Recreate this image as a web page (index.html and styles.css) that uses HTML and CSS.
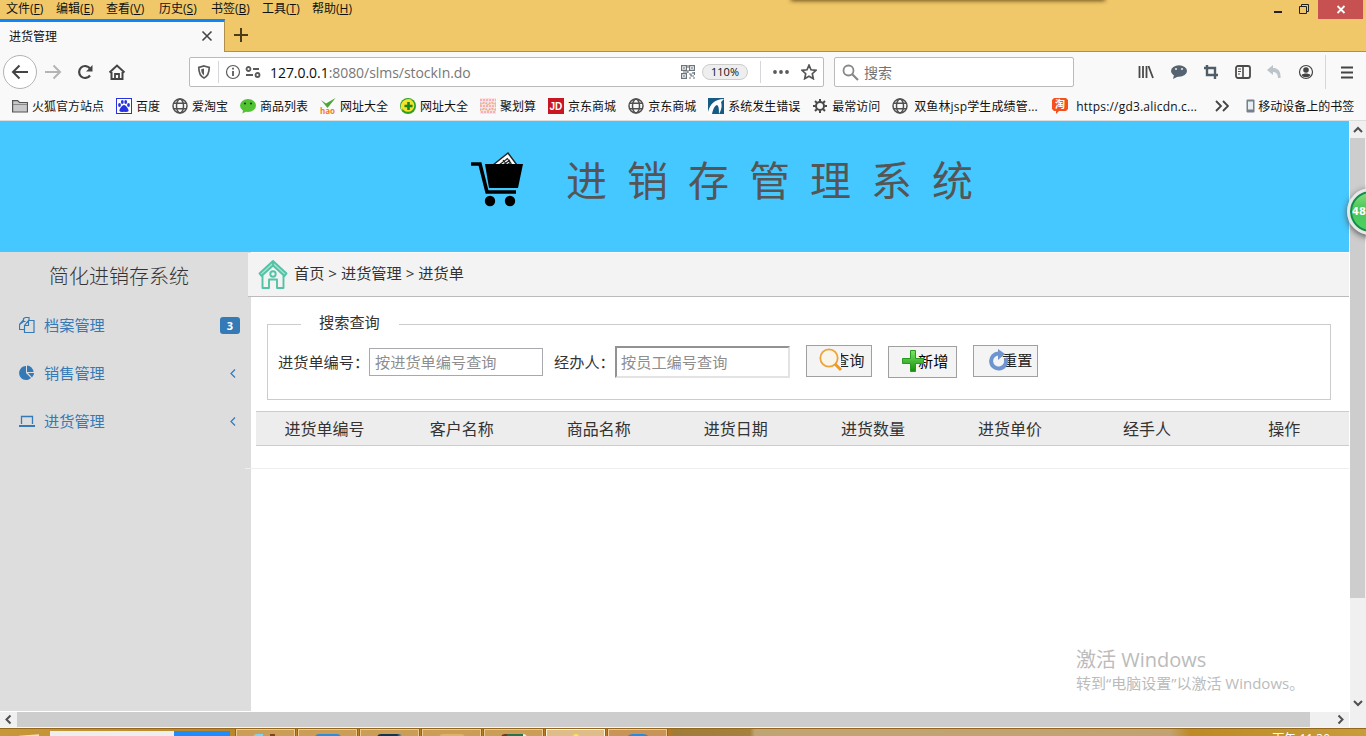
FILE: index.html
```html
<!DOCTYPE html>
<html lang="zh-CN">
	<head>
		<meta charset="UTF-8">
		<title>进货管理</title>
		<link rel="stylesheet" href="styles.css">
	</head>
	<body>
		<div class="titlebar">
			<div class="menubar">
				<span class="m1">文件(<u>F</u>)</span>
				<span class="m2">编辑(<u>E</u>)</span>
				<span class="m3">查看(<u>V</u>)</span>
				<span class="m4">历史(<u>S</u>)</span>
				<span class="m5">书签(<u>B</u>)</span>
				<span class="m6">工具(<u>T</u>)</span>
				<span>帮助(<u>H</u>)</span>
				<div class="window-buttons">
					<svg width="44" height="19" viewBox="0 0 44 19"><path d="M3 12h8" stroke="#222" stroke-width="2"/><path d="M28.500 6.500h7v7h-7zM30.500 6v-1.500h7v7h-1.500" fill="none" stroke="#222"/></svg>
					<div class="win-close"><svg width="10" height="9" viewBox="0 0 10 9"><path d="M1.500 1l7 7M8.500 1l-7 7" stroke="#fff" stroke-width="1.800"/></svg></div>
				</div>
			</div>
			<div class="tabs">
				<div class="tab">
					<span>进货管理</span>
					<svg width="12" height="12" viewBox="0 0 12 12"><path d="M1.500 1.500l9 9M10.500 1.500l-9 9" stroke="#444" stroke-width="1.600"/></svg>
				</div>
				<div class="tab-rest">
					<svg width="16" height="16" viewBox="0 0 16 16"><path d="M8 1v14M1 8h14" stroke="#4b3d1c" stroke-width="2"/></svg>
				</div>
			</div>
			<div class="top-shadow"></div>
		</div>

		<div class="navbar">
			<div class="back"><svg width="18" height="16" viewBox="0 0 18 16"><path d="M17 8H2M8.500 1.500L2 8l6.500 6.500" fill="none" stroke="#444" stroke-width="2"/></svg></div>
			<svg class="forward" width="18" height="16" viewBox="0 0 18 16"><path d="M1 8h15M9.500 1.500L16 8l-6.500 6.500" fill="none" stroke="#b5b5b5" stroke-width="2"/></svg>
			<svg class="reload" width="16" height="16" viewBox="0 0 16 16"><path d="M13 11.500A6 6 0 1 1 13 4.500" fill="none" stroke="#444" stroke-width="2.200"/><path d="M15.500 1v6.500H9z" fill="#444"/></svg>
			<svg class="home" width="18" height="16" viewBox="0 0 18 16"><path d="M1.500 8.500L9 1.500l7.500 7M3.500 8v7h11V8" fill="none" stroke="#444" stroke-width="2"/><path d="M7 15v-5h4v5" fill="none" stroke="#444" stroke-width="1.800"/></svg>

			<div class="urlbar">
				<svg class="shield" width="14" height="14" viewBox="0 0 14 14"><path d="M7 1l5.200 1.500c0 5-1 8.500-5.200 10.500C2.800 11 1.800 7.500 1.800 2.500z" fill="#fff" stroke="#5a5a5a" stroke-width="1.700"/><path d="M7 3.500v7C5 9 4.200 7 4.200 4.200z" fill="#5a5a5a"/></svg>
				<i class="sep"></i>
				<svg class="info" width="16" height="16" viewBox="0 0 16 16"><circle cx="8" cy="8" r="6.500" fill="none" stroke="#5a5a5a" stroke-width="1.200"/><path d="M8 7v5M8 3.800v1.800" stroke="#5a5a5a" stroke-width="1.800"/></svg>
				<svg class="perms" width="16" height="12" viewBox="0 0 16 12"><g fill="none" stroke="#5a5a5a" stroke-width="1.800"><circle cx="3.500" cy="3" r="2"/><path d="M8 3h6M1 9h7"/><circle cx="12.500" cy="9" r="2"/></g></svg>
				<span class="url">127.0.0.1<em>:8080/slms/stockIn.do</em></span>
				<svg class="qr" width="14" height="14" viewBox="0 0 14 14"><g fill="none" stroke="#6c757c" stroke-width="1.200"><path d="M.6.600h4.800v4.800H.6zM8.600.600h4.800v4.800H8.600zM.6 8.600h4.800v4.800H.6z"/><path d="M3 2v2M11 2v2M3 10v2M7 0v3M7 5v3M2 7h5M8 9h2v2h3M12 7v2M8 13h2M12 13h2M13.500 7v3"/></g></svg>
				<span class="zoom">110%</span>
				<i class="sep zoom-sep"></i>
				<svg class="dots" width="16" height="4" viewBox="0 0 16 4" fill="#5a5a5a"><circle cx="2" cy="2" r="1.900"/><circle cx="8" cy="2" r="1.900"/><circle cx="14" cy="2" r="1.900"/></svg>
				<svg width="16" height="16" viewBox="0 0 16 16"><path d="M8 1.200l2 4.600 5 .5-3.700 3.400 1 5L8 12.200l-4.300 2.500 1-5L1 6.300l5-.5z" fill="none" stroke="#555" stroke-width="1.700"/></svg>
			</div>
			<div class="searchbar">
				<svg width="17" height="17" viewBox="0 0 17 17"><circle cx="6.500" cy="6.500" r="5" fill="none" stroke="#888" stroke-width="1.800"/><path d="M10 10l6 6" stroke="#888" stroke-width="2.200"/></svg>
				<span>搜索</span>
			</div>
			<div class="tools">
				<svg width="16" height="16" viewBox="0 0 16 16"><path d="M1.500 2v12M5 2v12M8.500 2v12M10.500 2l4.500 12" stroke="#4a4a4a" stroke-width="1.800"/></svg>
				<svg width="18" height="16" viewBox="0 0 18 16"><ellipse cx="9" cy="7" rx="8" ry="5.800" fill="#566370"/><path d="M4 11l-1 4 6-3z" fill="#566370"/><circle cx="6" cy="5" r="1.100" fill="#dfe5ea"/><circle cx="12" cy="5" r="1.100" fill="#dfe5ea"/></svg>
				<svg width="16" height="16" viewBox="0 0 16 16"><path d="M1 4h11v11M4 1v10h11" fill="none" stroke="#4f5d69" stroke-width="2.400"/></svg>
				<svg width="16" height="16" viewBox="0 0 16 16"><rect x="1" y="2" width="14" height="12" rx="2" fill="none" stroke="#4a4a4a" stroke-width="1.800"/><path d="M8 2v12" stroke="#4a4a4a" stroke-width="1.600"/><path d="M3 5h3M3 7.500h3M3 10h2" stroke="#4a4a4a"/></svg>
				<svg width="16" height="16" viewBox="0 0 16 16"><path d="M1 6l6-5v3c5 0 8 3 7.500 10H12c0-4-2-6-5-6v3z" fill="#bcc3c9"/></svg>
				<svg width="16" height="16" viewBox="0 0 16 16"><circle cx="8" cy="8" r="6.500" fill="none" stroke="#444" stroke-width="1.200"/><circle cx="8" cy="6" r="2.800" fill="#444"/><path d="M3.500 11c2-2 7-2 9 0-1.500 3-7.500 3-9 0z" fill="#444"/></svg>
			</div>
			<div class="hamburger"><svg width="12" height="13" viewBox="0 0 12 13"><path d="M0 1.500h12M0 6.500h12M0 11.500h12" stroke="#444" stroke-width="1.800"/></svg></div>
		</div>

		<div class="bookmarks">
			<span class="bm"><svg width="16" height="16" viewBox="0 0 16 16"><path d="M.6 14V2.600h5L7.500 4.500h8V14z" fill="#c9c9cc" stroke="#555" stroke-width="1.200"/><path d="M1 6.500h14" stroke="#777" stroke-width=".8"/></svg>火狐官方站点</span>
			<span class="bm"><svg width="16" height="16" viewBox="0 0 16 16"><rect x=".5" y=".5" width="15" height="15" fill="#fff" stroke="#2932e1"/><g fill="#2932e1"><ellipse cx="3.500" cy="7" rx="1.400" ry="1.900"/><ellipse cx="6.300" cy="4" rx="1.400" ry="2"/><ellipse cx="9.700" cy="4" rx="1.400" ry="2"/><ellipse cx="12.500" cy="7" rx="1.400" ry="1.900"/><path d="M8 7c2 0 4 3.500 4.500 5s-1 2.500-4.500 1.800C4.500 14.500 3 13.500 3.500 12S6 7 8 7z"/></g></svg>百度</span>
			<span class="bm"><svg width="16" height="16" viewBox="0 0 16 16"><g fill="none" stroke="#505050" stroke-width="1.500"><circle cx="8" cy="8" r="7"/><ellipse cx="8" cy="8" rx="3.500" ry="7"/><path d="M2 5.300h12M2 10.700h12"/></g></svg>爱淘宝</span>
			<span class="bm"><svg width="16" height="16" viewBox="0 0 16 16"><ellipse cx="8" cy="7.500" rx="8" ry="6.500" fill="#51c332"/><path d="M3 12l-.5 3.500L7 13z" fill="#51c332"/><circle cx="5" cy="5.500" r="1.100" fill="#143d0c"/><circle cx="11" cy="5.500" r="1.100" fill="#143d0c"/></svg>商品列表</span>
			<span class="bm"><svg width="16" height="16" viewBox="0 0 16 16"><path d="M1 2l5 3.500L15.500 0 7.500 10z" fill="#4ba636"/><text class="hao" x="0" y="15.500">hao</text></svg>网址大全</span>
			<span class="bm"><svg width="16" height="16" viewBox="0 0 16 16"><circle cx="8" cy="8" r="8" fill="#2e9e23"/><path d="M2 13C-2 6 4-1 13 2 7 2 4 6 2 13z" fill="#f7e12e"/><circle cx="8" cy="7.500" r="6.300" fill="#f4e32c"/><path d="M8.500 4v8M4.500 8h8" stroke="#178421" stroke-width="2.600"/></svg>网址大全</span>
			<span class="bm"><svg width="16" height="16" viewBox="0 0 16 16"><path fill="#fbe1df" d="M0 0h16v16H0z"/><path d="M0 2h16M0 8h16M1 14h15" stroke="#ee7d9b" stroke-dasharray="2 1"/><path d="M0 5h16M0 11h16" stroke="#8aafe6" stroke-dasharray="1 2"/><path d="M0 6.500l4-2 4 2 4-2 4 2M0 12.500l4-2 4 2 4-2 4 2" fill="none" stroke="#eda957" stroke-width=".8"/></svg>聚划算</span>
			<span class="bm"><svg width="16" height="16" viewBox="0 0 16 16"><path fill="#c91623" d="M0 0h16v16H0z"/><text class="jd" x="1.500" y="12">JD</text></svg>京东商城</span>
			<span class="bm"><svg width="16" height="16" viewBox="0 0 16 16"><g fill="none" stroke="#505050" stroke-width="1.500"><circle cx="8" cy="8" r="7"/><ellipse cx="8" cy="8" rx="3.500" ry="7"/><path d="M2 5.300h12M2 10.700h12"/></g></svg>京东商城</span>
			<span class="bm"><svg width="16" height="16" viewBox="0 0 16 16"><path fill="#165b84" d="M0 0h16v16H0z"/><path d="M0 14C2 6 7 1 16 1l-3 3c1 3 1 7-2 12 0-4 0-8-2-9-3 1-4 5-5 9H0z" fill="#fff"/></svg>系统发生错误</span>
			<span class="bm"><svg width="16" height="16" viewBox="0 0 16 16"><circle cx="8" cy="8" r="4" fill="none" stroke="#4a4a4a" stroke-width="2"/><path d="M8 1v2.500M8 12.500V15M1 8h2.500M12.500 8H15M3 3l2 2M11 11l2 2M13 3l-2 2M5 11l-2 2" stroke="#4a4a4a" stroke-width="2"/></svg>最常访问</span>
			<span class="bm bm-jsp"><svg width="16" height="16" viewBox="0 0 16 16"><g fill="none" stroke="#505050" stroke-width="1.500"><circle cx="8" cy="8" r="7"/><ellipse cx="8" cy="8" rx="3.500" ry="7"/><path d="M2 5.300h12M2 10.700h12"/></g></svg>双鱼林jsp学生成绩管...</span>
			<span class="bm bm-url"><svg width="16" height="16" viewBox="0 0 16 16"><path fill="#f4511e" d="M2 0h12l2 2v9l-2 2H7l-3 3v-3H2l-2-2V2z"/><text class="tao" x="3" y="10">淘</text></svg>https://gd3.alicdn.c...</span>
			<svg class="more" width="14" height="12" viewBox="0 0 14 12"><path d="M1 1l5 5-5 5M8 1l5 5-5 5" fill="none" stroke="#444" stroke-width="1.800"/></svg>
			<span class="mobile"><svg width="9" height="14" viewBox="0 0 9 14"><rect x=".5" y=".5" width="8" height="13" rx="1" fill="#74808a"/><path fill="#e8eef2" d="M2 2.500h5v8H2z"/></svg>移动设备上的书签</span>
		</div>

		<div class="viewport">
			<div class="view">
				<div class="page">
					<div class="banner">
						<svg width="56" height="58" viewBox="0 0 56 58"><path d="M24 14L39 2l9 12-2 4H24z" fill="#fff" stroke="#222" stroke-width="1.500"/><path d="M30 14l8-6M34 14l7-5M38 14l4-3M34 9l4 5M38 7l5 7" stroke="#222" stroke-width="1.200"/><path d="M16 13h38l-5 24H20z"/><path d="M2 13h9l7 28h29" fill="none" stroke="#000" stroke-width="3.600"/><circle cx="21" cy="50" r="5.200"/><circle cx="41" cy="50" r="5.200"/></svg>
						<h1>进销存管理系统</h1>
					</div>
					<div class="main">
						<div class="sidebar">
							<h2>简化进销存系统</h2>
							<a class="item"><svg width="16" height="16" viewBox="0 0 16 16"><path d="M6.500 4.500h-2l-4 3v5h5M4.500 4.500v-3l2-1h3.500v3M.5 7.500L4.500 3M5.500 15.500v-7l4-5h5.500v12zM5.500 8.500h4v-5" fill="none" stroke="#337ab7" stroke-width="1.200"/></svg><span>档案管理</span><b class="badge">3</b></a>
							<a class="item"><svg width="16" height="16" viewBox="0 0 16 16" fill="#337ab7"><path d="M7 1v7l5 5A7 7 0 1 1 7 1z"/><path d="M8 .500a7 7 0 0 1 6.500 6.500H8z"/><path d="M9 8h6a6 6 0 0 1-2 4.500z"/></svg><span>销售管理</span><svg class="arrow" width="6" height="9" viewBox="0 0 6 9"><path d="M5 .500l-4 4 4 4" fill="none" stroke="#337ab7" stroke-width="1.200"/></svg></a>
							<a class="item"><svg width="16" height="16" viewBox="0 0 16 16"><path d="M2.500 11V3.500h11V11" fill="none" stroke="#337ab7" stroke-width="1.300"/><path d="M0 12h16v2H0z" fill="#337ab7"/></svg><span>进货管理</span><svg class="arrow" width="6" height="9" viewBox="0 0 6 9"><path d="M5 .500l-4 4 4 4" fill="none" stroke="#337ab7" stroke-width="1.200"/></svg></a>
						</div>
						<div class="content">
							<div class="crumbs">
								<svg width="30" height="30" viewBox="0 0 30 30"><g fill="none" stroke="#53c3a6" stroke-width="1.900" stroke-linejoin="round"><path fill="#a9e3d3" d="M15 2L1.500 14.500l2 2.500L15 6.500 26.500 17l2-2.500z"/><path d="M4.500 16.500V29H11v-8.500h8V29h6.500V16.500"/><circle cx="15" cy="15" r="2.700"/><path d="M15 2v4"/></g></svg>
								<span>首页 &gt; 进货管理 &gt; 进货单</span>
							</div>
							<fieldset>
								<legend>搜索查询</legend>
								<div class="form-row">
									<label>进货单编号<span class="colon">：</span></label><input class="plain" type="text" placeholder="按进货单编号查询">
									<label class="second">经办人<span class="colon">：</span></label><input class="inset" type="text" placeholder="按员工编号查询">
									<button class="query"><svg width="24" height="24" viewBox="0 0 24 24"><path fill="#f5f5f5" d="M0 0h22v24H0z"/><circle cx="10" cy="10" r="8.700" fill="#faf5ea" stroke="#eda339" stroke-width="1.800"/><path d="M16 16l6 6" stroke="#ee9b22" stroke-width="3"/></svg>查询</button>
									<button class="add"><svg width="24" height="24" viewBox="0 0 24 24"><defs><linearGradient id="g" x2="0" y2="1"><stop offset="0" stop-color="#7be764"/><stop offset="1" stop-color="#138f0b"/></linearGradient></defs><path d="M9.500 1.500h5v8h8v5h-8v8h-5v-8h-8v-5h8z" fill="url(#g)" stroke="#279b1d"/></svg>新增</button>
									<button class="reset"><svg width="22" height="22" viewBox="0 0 22 22"><path d="M17.500 9A7.500 7.500 0 1 1 11 4.500" fill="none" stroke="#6f94d2" stroke-width="4"/><path d="M10 0l7 5-7 6z" fill="#6f94d2"/></svg>重置</button>
								</div>
							</fieldset>
							<div class="thead">
								<span>进货单编号</span><span>客户名称</span><span>商品名称</span><span>进货日期</span><span>进货数量</span><span>进货单价</span><span>经手人</span><span>操作</span>
							</div>
							<div class="trow"></div>
						</div>
					</div>
				</div>
				<div class="hscroll">
					<svg width="17" height="15" viewBox="0 0 17 15"><path d="M10.500 3.500l-4 4 4 4" fill="none" stroke="#505050" stroke-width="2"/></svg>
					<div class="hthumb"></div>
					<svg class="right" width="17" height="15" viewBox="0 0 17 15"><path d="M6.500 3.500l4 4-4 4" fill="none" stroke="#505050" stroke-width="2"/></svg>
				</div>
			</div>
			<div class="vscroll">
				<svg width="16" height="17" viewBox="0 0 16 17"><path d="M4 11l4-4 4 4" fill="none" stroke="#505050" stroke-width="2"/></svg>
				<div class="vthumb"></div>
				<svg class="down" width="16" height="17" viewBox="0 0 16 17"><path d="M4 6l4 4 4-4" fill="none" stroke="#505050" stroke-width="2"/></svg>
			</div>
			<div class="ball">48</div>
			<div class="activate">
				<p class="big">激活 Windows</p>
				<p>转到“电脑设置”以激活 Windows。</p>
			</div>
		</div>

		<div class="taskbar">
			<div class="start"></div>
			<div class="task-search"></div>
			<div class="task-go"></div>
			<div class="task"><i class="t-cyan"></i></div>
			<div class="task"><i class="t-blue"></i></div>
			<div class="task"><i class="t-navy"></i></div>
			<div class="task"><i class="t-tan"></i></div>
			<div class="task"><i class="t-green"></i></div>
			<div class="task active"><i class="t-yellow"></i></div>
			<div class="task last"><i class="t-round"></i></div>
			<span class="clock">下午 11:30</span>
		</div>
	</body>
</html>
```
FILE: styles.css
```css
* {
	box-sizing: border-box;
}

html, body {
	margin:   0;
	height:   736px;
	overflow: hidden;
}

body {
	display:        flex;
	flex-direction: column;
	font-family:    "Open Sans", "Noto Sans CJK SC", sans-serif;
	font-size:      12px;
	color:          #111;
	background:     #fff;
}

svg {
	display:     block;
	flex-shrink: 0;
}

/* title bar */
.titlebar {
	height:     52px;
	position:   relative;
	background: #f0c869;
}

.menubar {
	height:       19px;
	display:      flex;
	padding-left: 6px;
	line-height:  17px;
	white-space:  nowrap;
}

.menubar > span {
	width: 50px;
}

.menubar > .m3 { width: 53px; }
.menubar > .m4 { width: 52px; }
.menubar > .m5 { width: 51px; }

.window-buttons {
	display:      flex;
	margin-left:  auto;
	margin-right: 3px;
}

.win-close {
	width:           45px;
	height:          19px;
	margin-left:     3px;
	background:      #c75050;
	display:         flex;
	align-items:     center;
	justify-content: center;
}

.tabs {
	display: flex;
	height:  33px;
}

.tab {
	width:           225px;
	border-top:      3px solid #0a84ff;
	border-right:    1px solid #b08f4a;
	background:      #f9f9fa;
	display:         flex;
	align-items:     center;
	justify-content: space-between;
	padding:         0 11px 2px 9px;
}

.tab-rest {
	flex:          1;
	border-bottom: 1px solid #b08f4a;
	padding:       8px 0 0 8px;
}

.top-shadow {
	position:   absolute;
	left:       792px;
	top:        -4px;
	width:      312px;
	height:     4px;
	box-shadow: 0 0 4px 1px #6b531c;
}

/* navigation bar */
.navbar {
	height:      38px;
	display:     flex;
	align-items: center;
	background:  #f9f9fa;
	padding:     2px 0 0 3px;
}

.back {
	width:           34px;
	height:          34px;
	border:          1px solid #b3b3b3;
	border-radius:   50%;
	background:      #fff;
	display:         flex;
	align-items:     center;
	justify-content: center;
}

.forward { margin-left: 7px; }
.reload  { margin-left: 15px; }
.home    { margin-left: 15px; }

.urlbar, .searchbar {
	height:        30px;
	border:        1px solid #bbb;
	border-radius: 2px;
	background:    #fff;
	display:       flex;
	align-items:   center;
}

.urlbar {
	width:       635px;
	margin-left: 63px;
}

.shield { margin-left: 7px; }

.sep {
	width:       1px;
	height:      22px;
	background:  #d7d7db;
	margin-left: 7px;
}

.info  { margin-left: 6px; }
.perms { margin-left: 4px; }

.url {
	width:          411px;
	margin-left:    9px;
	font-size:      14px;
	letter-spacing: -.05px;
	color:          #0c0c0d;
}

.url em {
	font-style: normal;
	color:      #777;
}

.zoom {
	width:         46px;
	height:        16px;
	margin-left:   7px;
	border:        1px solid #ccc;
	border-radius: 8px;
	background:    #eee;
	font-size:     11px;
	line-height:   14px;
	text-align:    center;
}

.zoom-sep { margin-left: 12px; }

.dots {
	margin-left:  12px;
	margin-right: 12px;
}

.searchbar {
	width:        240px;
	margin-left:  10px;
	padding-left: 7px;
	font-size:    14px;
	color:        #737373;
}

.searchbar span {
	margin-left: 5px;
}

.tools {
	width:           176px;
	margin-left:     64px;
	display:         flex;
	justify-content: space-between;
}

.hamburger {
	height:       34px;
	margin-left:  11px;
	border-left:  1px solid #d7d7db;
	padding-left: 15px;
	display:      flex;
	align-items:  center;
}

/* bookmarks */
.bookmarks {
	height:        31px;
	display:       flex;
	align-items:   center;
	background:    #f9f9fa;
	border-bottom: 1px solid #ddd;
	padding:       2px 0 0 12px;
	white-space:   nowrap;
}

.bm {
	display:      flex;
	align-items:  center;
	gap:          4px;
	margin-right: 12px;
}

.bm-jsp {
	width:          148px;
	gap:            6px;
	letter-spacing: .15px;
}

.bm-url {
	width:          151px;
	gap:            8px;
	letter-spacing: .2px;
}

.hao {
	font: bold 8px "Open Sans", sans-serif;
	fill: #f07c26;
}

.jd {
	font: bold 10px "Liberation Sans", sans-serif;
	fill: #fff;
}

.tao {
	font: bold 10px "Noto Sans CJK SC", sans-serif;
	fill: #fff;
}

.more {
	margin-right: 17px;
}

.mobile {
	display:     flex;
	align-items: center;
	gap:         3px;
}

/* viewport */
.viewport {
	height:   607px;
	display:  flex;
	position: relative;
}

.view {
	width:        1350px;
	border-right: 1px solid #fff;
}

.page {
	height:        591px;
	border-bottom: 1px solid #fff;
	overflow:      hidden;
	color:         #333;
	font-size:     15.2px;
}

.banner {
	height:       131px;
	background:   #45c8ff;
	display:      flex;
	align-items:  flex-start;
	padding:      30px 0 0 469px;
}

.banner h1 {
	margin:         -1px 0 0 41px;
	font-size:      41px;
	font-weight:    400;
	line-height:    60px;
	letter-spacing: 20px;
	color:          #555;
}

.main {
	display: flex;
	height:  459px;
}

.sidebar {
	width:      251px;
	background: #ddd;
}

.sidebar h2 {
	margin:      0 0 0 49px;
	height:      49px;
	font-size:   20px;
	font-weight: 300;
	line-height: 50px;
}

.item {
	display:     flex;
	align-items: center;
	height:      48px;
	padding:     0 11px 0 19px;
	color:       #337ab7;
}

.item > svg:first-child {
	margin-right: 9px;
}

.item span {
	padding-bottom: 2px;
}

.badge {
	width:         20px;
	height:        17px;
	margin-left:   auto;
	border-radius: 3px;
	background:    #337ab7;
	color:         #fff;
	font-size:     11px;
	font-weight:   bold;
	line-height:   17px;
	text-align:    center;
}

.arrow {
	margin-left:  auto;
	margin-right: 4px;
}

.content {
	width:       1101px;
	margin-left: -3px;
	padding-top: 1px;
}

.crumbs {
	height:        44px;
	background:    #f3f3f3;
	border-bottom: 1px solid #bbb;
	display:       flex;
	align-items:   center;
	padding:       0 0 2px 10px;
}

.crumbs span {
	margin-left:    6px;
	padding-bottom: 3px;
}

fieldset {
	width:   1064px;
	height:  86px;
	margin:  17px 0 0 19px;
	padding: 0 0 0 10px;
	border:  1px solid #ccc;
}

legend {
	width:       98px;
	margin-left: 23px;
	padding:     0 0 0 18px;
	height:      20px;
	line-height: 16px;
}

.form-row {
	display:     flex;
	align-items: center;
	height:      34px;
	margin-top:  10px;
}

.form-row label {
	width:          91px;
	padding-bottom: 1px;
	white-space:    nowrap;
}

.form-row .second {
	width:       61px;
	margin-left: 11px;
}

/* the TC face centres the full-width colon */
.colon {
	font-family: "Noto Sans CJK TC", sans-serif;
}

input {
	width:       174px;
	height:      28px;
	margin:      2px 0 0;
	padding:     0 5px 1px;
	border:      1px solid #a9a9ad;
	font-family: inherit;
	font-size:   15.2px;
}

input::placeholder {
	color: #8e8e8e;
}

.inset {
	width:        175px;
	height:       32px;
	padding:      0 4px 1px;
	border:       2px solid;
	border-color: #929292 #e3e3e3 #e3e3e3 #929292;
}

button {
	display:     flex;
	align-items: center;
	width:       66px;
	height:      32px;
	margin-left: 16px;
	padding:     0 0 3px 13px;
	border:      1px solid #a0a0a0;
	background:  #f4f4f4;
	font-family: inherit;
	font-size:   15.2px;
	color:       #222;
	white-space: nowrap;
}

/* icons partly cover the button text */
button svg {
	position:     relative;
	top:          1px;
	z-index:      1;
	margin-right: -8px;
}

.query { margin-top: -1px; }

.query svg {
	margin-left:  -1px;
	margin-right: -9px;
}

.add {
	width:      69px;
	margin-top: 1px;
	color:      #000;
}

.add svg {
	margin-left:  -1px;
	margin-right: -7px;
}

.reset {
	width:        65px;
	margin-top:   -1px;
	padding-left: 14px;
}

.thead {
	height:        35px;
	margin:        11px 0 0 8px;
	padding-bottom: 2px;
	display:       flex;
	align-items:   center;
	background:    #ededed;
	border:        1px solid #ccc;
	border-width:  1px 0;
	overflow:      hidden;
	font-size:     16px;
}

.thead span {
	flex:       0 0 137.1px;
	text-align: center;
}

.trow {
	height:        23px;
	margin-left:   -3px;
	border-bottom: 1px solid #eee;
}

/* scrollbars */
.hscroll {
	height:        16px;
	display:       flex;
	background:    #f0f0f0;
	border-bottom: 1px solid #f6f6f6;
}

.hthumb {
	width:      1293px;
	background: #cdcdcd;
}

.right { margin-left: auto; }

.vscroll {
	width:          16px;
	display:        flex;
	flex-direction: column;
	background:     #f0f0f0;
}

.vthumb {
	width:      15px;
	height:     460px;
	background: #cdcdcd;
}

.down {
	margin-top:    auto;
	margin-bottom: 16px;
}

.ball {
	position:      absolute;
	left:          1347px;
	top:           67px;
	width:         47px;
	height:        47px;
	border:        3px solid #e6e9e8;
	border-radius: 50%;
	background:    linear-gradient(#8ce07c, #45c65a 45%, #4ed35f);
	box-shadow:    inset 0 0 0 2px #168a54, 0 2px 6px #555;
	color:         #fff;
	font:          bold 10px/41px "DejaVu Sans", sans-serif;
	padding-left:  2px;
}

.activate {
	position:       absolute;
	left:           1076px;
	top:            525px;
	color:          #bbb;
	font-size:      15px;
	white-space:    nowrap;
}

.activate p {
	margin:      0;
	line-height: 19px;
}

.activate .big {
	font-size:   20px;
	line-height: 28px;
}

/* taskbar */
.taskbar {
	height:     8px;
	display:    flex;
	overflow:   hidden;
	border-top: 1px solid #94671c;
	background: linear-gradient(90deg, #c7983a, #b98429 20%, #b57827 670px, #9e7c3a 675px, #a5813e 750px, #c0a574 755px, #c2a273 1170px, #bd8a25 1190px, #c79d3a);
}

.start {
	width:       20px;
	height:      2px;
	margin:      6px 0 0 19px;
	background:  #f3e4bb;
	transform:   skewY(-5deg);
}

.task-search {
	width:      124px;
	margin:     2px 0 0 11px;
	background: #eee;
}

.task-go {
	width:        56px;
	margin:       2px 6px 0 0;
	background:   #1e8cff;
}

.task {
	width:           59px;
	height:          12px;
	margin-right:    3px;
	border:          1px solid #ebcb93;
	outline:         1px solid #8f6424;
	background:      #cb9e58;
	display:         flex;
	justify-content: center;
	padding-top:     4px;
}

.active {
	background:   #dfbd88;
	border-color: #fff3da;
}

.last {
	background: #c99457;
}

.task i {
	display:       block;
	width:         26px;
	height:        8px;
	border-radius: 4px 4px 0 0;
}

.t-cyan   { background: linear-gradient(90deg, #77d7f5 10px, transparent 10px 17px, #804318 17px 22px, transparent 22px); }
.t-blue   { background: #2b8bdc; }
.t-navy   { background: linear-gradient(90deg, #12354f 20px, #a9c2cf); }
.t-tan    { background: #dfb468; }
.t-green  { background: linear-gradient(90deg, #653d1f 6px, #28734a 6px 22px, #e9eee8 22px); }
.task .t-yellow { width: 6px; background: #ffe944; }
.task .t-round  { border-radius: 12px 12px 0 0; background: #238be0; }

.clock {
	margin:      3px 36px 0 auto;
	color:       #fff;
	line-height: 14px;
	white-space: nowrap;
}
```
